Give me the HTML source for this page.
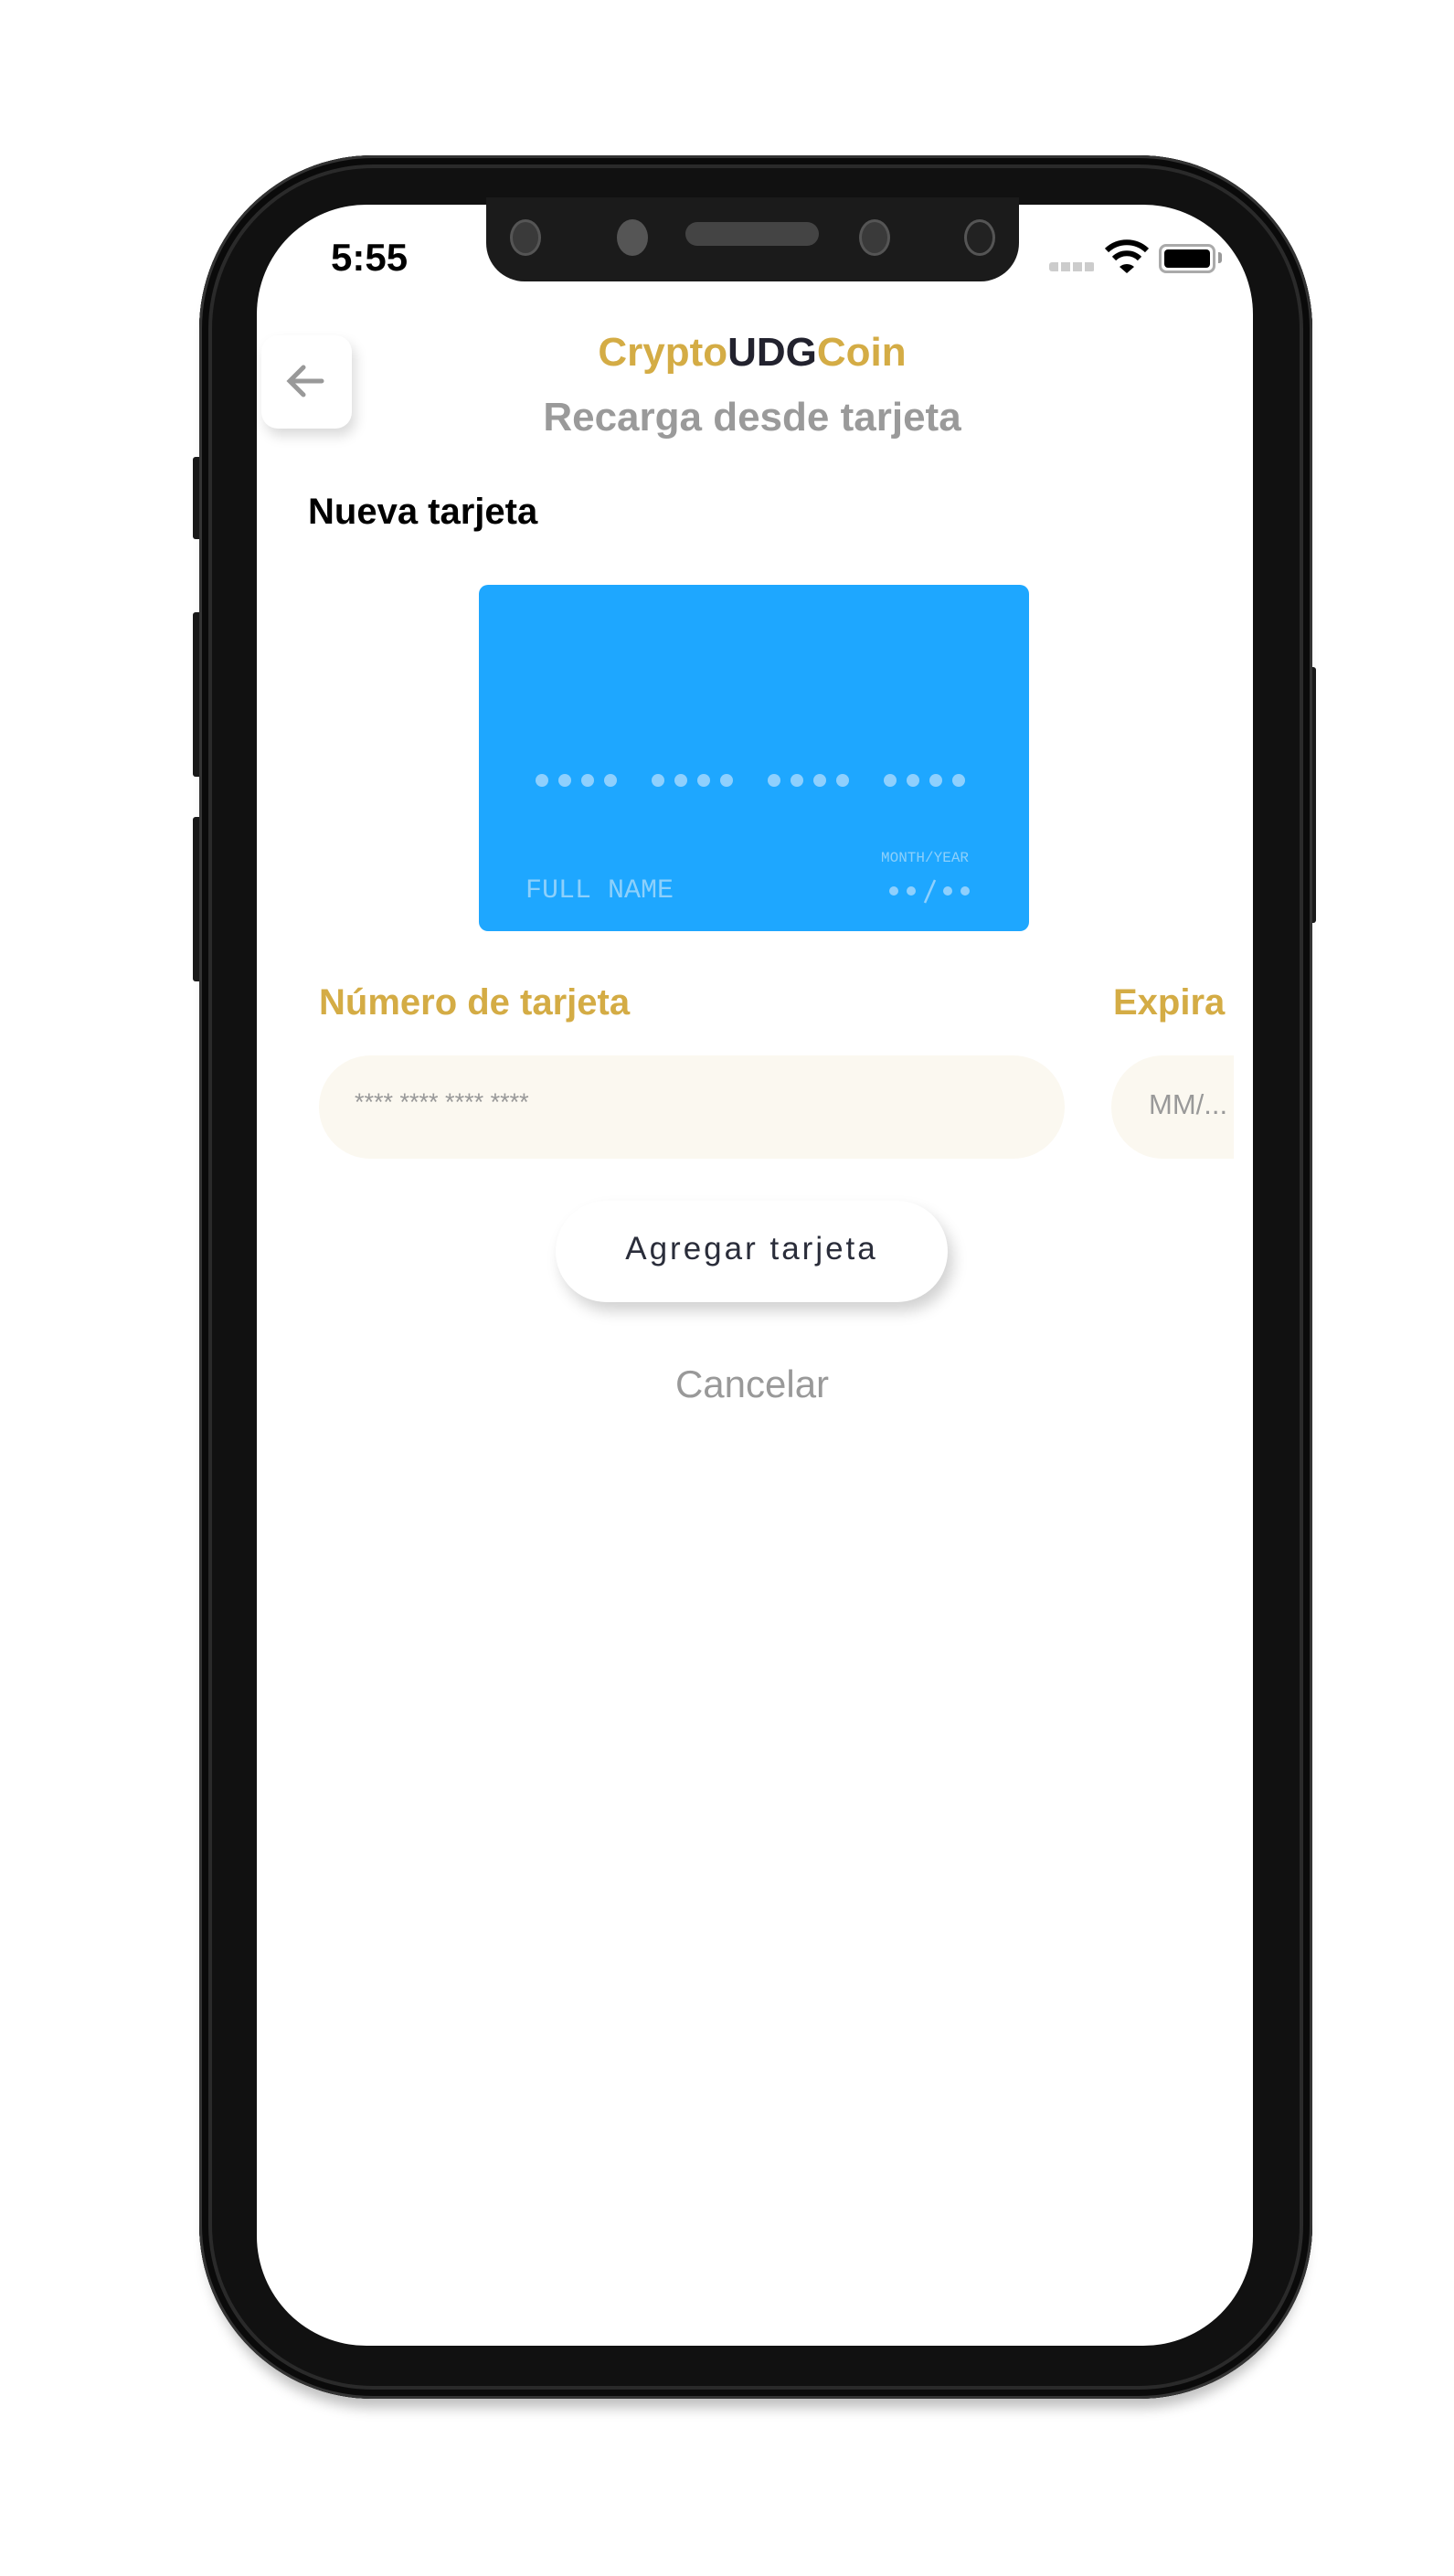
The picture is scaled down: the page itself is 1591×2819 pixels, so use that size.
<!DOCTYPE html>
<html><head><meta charset="utf-8"><style>
html,body{margin:0;padding:0;background:#fff;}
body{width:1591px;height:2819px;position:relative;overflow:hidden;font-family:"Liberation Sans",sans-serif;}
.abs{position:absolute;}
.phone{left:218px;top:170px;width:1218px;height:2455px;background:#111;border-radius:190px;box-shadow:inset 0 0 0 3px #333, inset 0 0 0 10px #0a0a0a, inset 0 0 0 14px #2a2a2a,0 18px 14px -8px rgba(0,0,0,.25);}
.screen{left:281px;top:224px;width:1090px;height:2343px;background:#fff;border-radius:120px;overflow:hidden;}
.notch{left:532px;top:216px;width:583px;height:92px;background:#1b1b1b;border-radius:0 0 42px 42px;}
.cam{border-radius:50%;background:#3a3a3a;border:3px solid #555;}
.side{background:#1a1a1a;border-radius:3px;}
</style></head><body>
<div class="abs side" style="left:211px;top:500px;width:12px;height:90px"></div>
<div class="abs side" style="left:211px;top:670px;width:12px;height:180px"></div>
<div class="abs side" style="left:211px;top:894px;width:12px;height:180px"></div>
<div class="abs side" style="left:1430px;top:730px;width:10px;height:280px"></div>
<div class="abs phone"></div>
<div class="abs screen"></div>
<div class="abs notch"></div>
<div class="abs cam" style="left:558px;top:240px;width:28px;height:34px"></div>
<div class="abs cam" style="left:675px;top:240px;width:28px;height:34px;background:#555"></div>
<div class="abs" style="left:750px;top:243px;width:146px;height:26px;border-radius:13px;background:#444"></div>
<div class="abs cam" style="left:940px;top:240px;width:28px;height:34px"></div>
<div class="abs cam" style="left:1055px;top:240px;width:28px;height:34px;background:#222"></div>
<div class="abs" style="left:362px;top:258px;font-size:42px;font-weight:bold;color:#000;">5:55</div>
<div class="abs" style="left:1148px;top:287px;width:50px;height:10px;background:repeating-linear-gradient(90deg,#ccc 0 10px,transparent 10px 13px);border-radius:3px"></div>
<svg class="abs" style="left:1208px;top:262px" width="50" height="38" viewBox="0 0 50 38"><path d="M3 12 A32 32 0 0 1 47 12" stroke="#000" stroke-width="6" fill="none"/><path d="M11 21 A20 20 0 0 1 39 21" stroke="#000" stroke-width="6" fill="none"/><path d="M17 30 L25 37 L33 30 A12 12 0 0 0 17 30Z" fill="#000"/></svg>
<div class="abs" style="left:1268px;top:267px;width:56px;height:26px;border:3px solid #aaa;border-radius:8px;"><div style="margin:3px;height:20px;background:#000;border-radius:4px"></div></div>
<div class="abs" style="left:1333px;top:276px;width:4px;height:12px;background:#999;border-radius:0 3px 3px 0"></div>

<div class="abs" style="left:286px;top:367px;width:99px;height:102px;background:#fff;border-radius:18px;box-shadow:4px 8px 14px rgba(0,0,0,.15)"></div>
<svg class="abs" style="left:312px;top:397px" width="44" height="40" viewBox="0 0 44 40"><path d="M40 20H6M20 5L5 20 20 35" stroke="#999" stroke-width="5" fill="none" stroke-linecap="round"/></svg>
<div class="abs" style="left:0;width:1646px;top:361px;text-align:center;font-size:44px;font-weight:bold;color:#D4AC45;">Crypto<span style="color:#22222e">UDG</span>Coin</div>
<div class="abs" style="left:0;width:1646px;top:432px;text-align:center;font-size:44px;font-weight:bold;color:#9a9a9a;">Recarga desde tarjeta</div>
<div class="abs" style="left:337px;top:538px;font-size:40px;font-weight:bold;color:#000;">Nueva tarjeta</div>

<div class="abs" style="left:524px;top:640px;width:602px;height:379px;background:#1EA7FF;border-radius:10px;"></div>
<svg class="abs" style="left:0;top:0" width="1591" height="1100" fill="#8fd0fd">
<g id="g"><circle cx="593" cy="854" r="7"/><circle cx="618" cy="854" r="7"/><circle cx="643" cy="854" r="7"/><circle cx="668" cy="854" r="7"/></g>
<use href="#g" x="127"/><use href="#g" x="254"/><use href="#g" x="381"/>
<circle cx="978" cy="975" r="5"/><circle cx="997" cy="975" r="5"/><circle cx="1037" cy="975" r="5"/><circle cx="1056" cy="975" r="5"/>
<path d="M1023 963 L1012 988" stroke="#8fd0fd" stroke-width="2.5"/>
</svg>
<div class="abs" style="left:575px;top:958px;font-family:'Liberation Mono',monospace;font-size:30px;color:#8dd0fb;">FULL NAME</div>
<div class="abs" style="left:964px;top:930px;font-family:'Liberation Mono',monospace;font-size:16px;color:#8dd0fb;">MONTH/YEAR</div>

<div class="abs" style="left:349px;top:1075px;font-size:40px;font-weight:bold;color:#D4AC45;">Número de tarjeta</div>
<div class="abs" style="left:1218px;top:1075px;font-size:40px;font-weight:bold;color:#D4AC45;">Expira</div>
<div class="abs" style="left:349px;top:1155px;width:816px;height:113px;background:#FBF8F0;border-radius:57px;"></div>
<div class="abs" style="left:388px;top:1191px;font-size:27px;color:#999;">**** **** **** ****</div>
<div class="abs" style="left:1216px;top:1155px;width:134px;height:113px;background:#FBF8F0;border-radius:57px 0 0 57px;"></div>
<div class="abs" style="left:1257px;top:1191px;font-size:31px;color:#999;">MM/...</div>

<div class="abs" style="left:608px;top:1314px;width:429px;height:111px;background:#fff;border-radius:56px;box-shadow:6px 10px 16px rgba(0,0,0,.18)"></div>
<div class="abs" style="left:608px;width:429px;top:1347px;text-align:center;font-size:35px;letter-spacing:3px;color:#2a2d3a;">Agregar tarjeta</div>
<div class="abs" style="left:0;width:1646px;top:1491px;text-align:center;font-size:42px;color:#999;">Cancelar</div>
</body></html>
